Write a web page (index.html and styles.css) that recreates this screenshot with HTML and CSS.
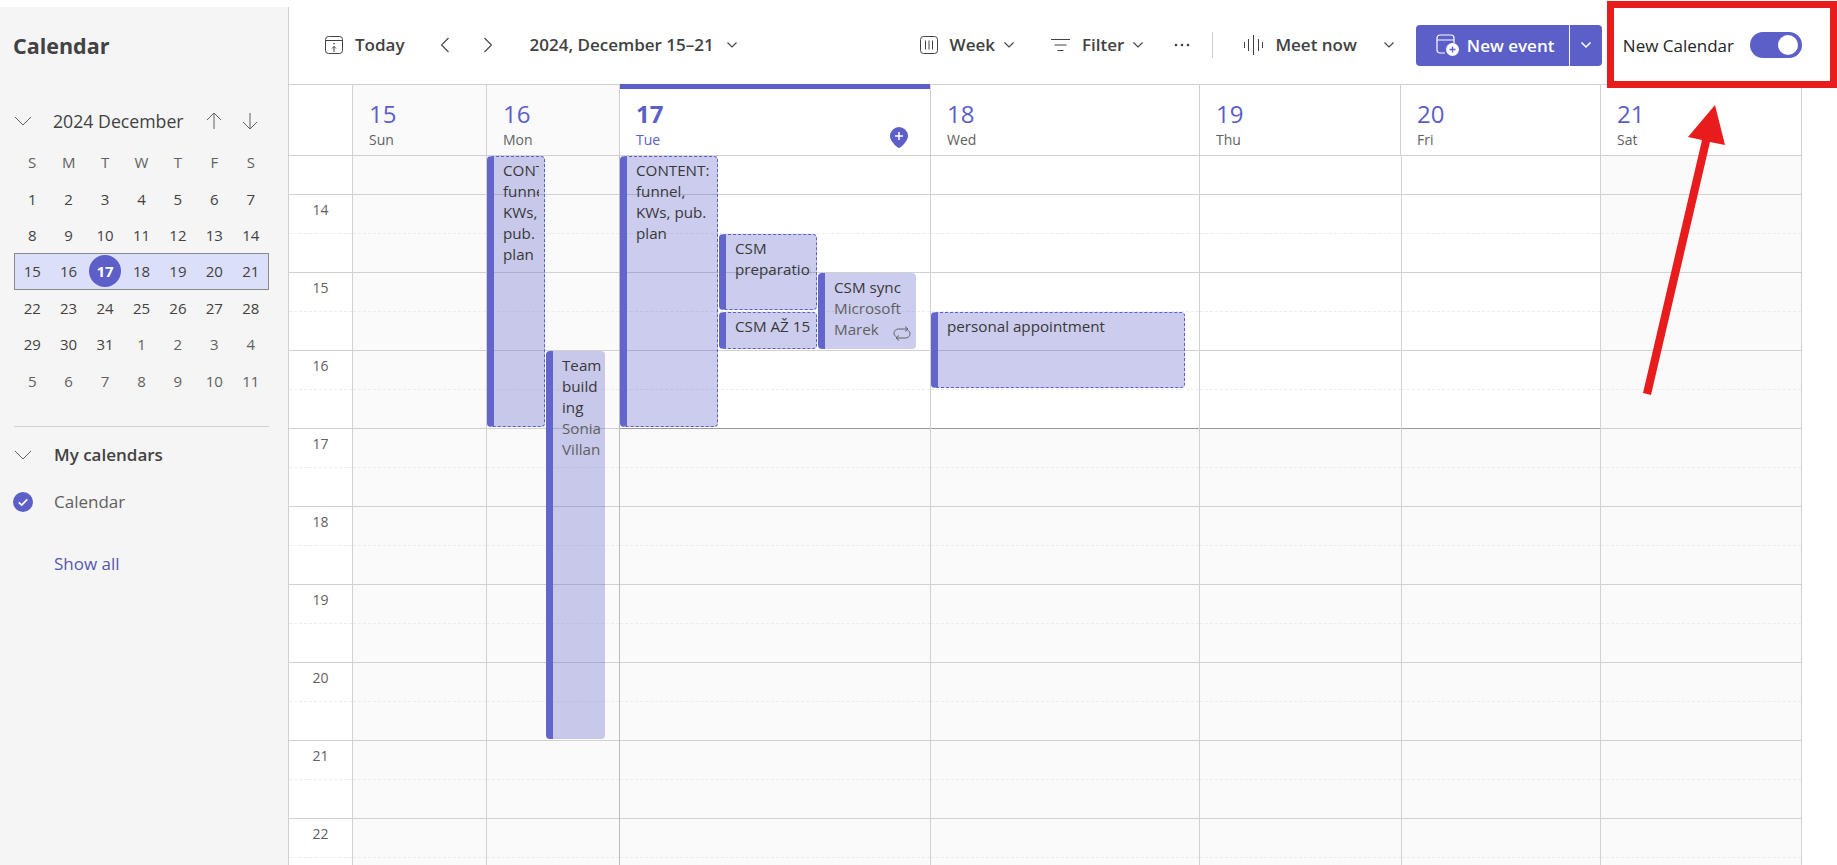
FILE: index.html
```html
<!DOCTYPE html>
<html lang="en">
<head>
<meta charset="utf-8">
<title>Calendar</title>
<link rel="stylesheet" href="styles.css">
</head>
<body>
<div class="app">
  <aside class="sidebar">
    <h1 class="side-title">Calendar</h1>
    <div class="month-head">
      <svg class="side-chev" width="18" height="10" viewBox="0 0 18 10"><path d="M1 1l8 8 8-8" fill="none" stroke="#616161"/></svg>
      <span class="month-name">2024 December</span>
      <svg class="arrow-up" width="16" height="18" viewBox="0 0 16 18"><path d="M8 17V1M1 8l7-7 7 7" fill="none" stroke="#616161"/></svg>
      <svg class="arrow-down" width="16" height="18" viewBox="0 0 16 18"><path d="M8 1v16M1 10l7 7 7-7" fill="none" stroke="#616161"/></svg>
    </div>
    <div class="month">
      <div class="row dow"><span>S</span><span>M</span><span>T</span><span>W</span><span>T</span><span>F</span><span>S</span></div>
      <div class="row"><span>1</span><span>2</span><span>3</span><span>4</span><span>5</span><span>6</span><span>7</span></div>
      <div class="row"><span>8</span><span>9</span><span>10</span><span>11</span><span>12</span><span>13</span><span>14</span></div>
      <div class="row sel"><span>15</span><span>16</span><span><b class="today-dot">17</b></span><span>18</span><span>19</span><span>20</span><span>21</span></div>
      <div class="row"><span>22</span><span>23</span><span>24</span><span>25</span><span>26</span><span>27</span><span>28</span></div>
      <div class="row"><span>29</span><span>30</span><span>31</span><span class="out">1</span><span class="out">2</span><span class="out">3</span><span class="out">4</span></div>
      <div class="row"><span class="out">5</span><span class="out">6</span><span class="out">7</span><span class="out">8</span><span class="out">9</span><span class="out">10</span><span class="out">11</span></div>
    </div>
    <div class="side-rule"></div>
    <div class="cal-head">
      <svg class="side-chev" width="18" height="10" viewBox="0 0 18 10"><path d="M1 1l8 8 8-8" fill="none" stroke="#616161"/></svg>
      <span class="cal-head-text">My calendars</span>
    </div>
    <div class="cal-item">
      <svg width="20" height="20" viewBox="0 0 20 20"><circle cx="10" cy="10" r="10" fill="#5b5fc7"/><path d="M5.800 10.400l2.900 2.700 5.600-5.800" fill="none" stroke="#fff" stroke-width="1.800"/></svg>
      <span class="cal-item-text">Calendar</span>
    </div>
    <a class="show-all">Show all</a>
  </aside>

  <main class="main">
    <header class="toolbar">
      <svg class="ic-today" width="18" height="18" viewBox="0 0 18 18"><rect x=".5" y=".5" width="17" height="17" rx="3" fill="none" stroke="#424242"/><path d="M1 4.500h16" stroke="#424242"/><path d="M9 16v-5.500M7 12.500l2-2 2 2" fill="none" stroke="#424242"/><circle cx="9" cy="7.500" r=".8" fill="#424242"/></svg>
      <span class="tb-text today-text">Today</span>
      <svg class="prev" width="10" height="16" viewBox="0 0 10 16"><path d="M8.500 1L1.500 8l7 7" fill="none" stroke="#424242" stroke-width="1.100"/></svg>
      <svg class="next" width="10" height="16" viewBox="0 0 10 16"><path d="M1.500 1l7 7-7 7" fill="none" stroke="#424242" stroke-width="1.100"/></svg>
      <span class="tb-text range">2024, December 15–21</span>
      <svg class="chev range-chev" width="12" height="8" viewBox="0 0 12 8"><path d="M1.500 1.500L6 6l4.500-4.500" fill="none" stroke="#424242" stroke-width="1.100"/></svg>

      <div class="tb-right">
        <svg width="18" height="18" viewBox="0 0 18 18"><rect x=".5" y=".5" width="17" height="17" rx="3" fill="none" stroke="#424242"/><path d="M5.500 4.500v9M9 4.500v9M12.500 4.500v9" stroke="#424242"/></svg>
        <span class="tb-text gap-icon">Week</span>
        <svg class="chev gap-chev" width="12" height="8" viewBox="0 0 12 8"><path d="M1.500 1.500L6 6l4.500-4.500" fill="none" stroke="#424242" stroke-width="1.100"/></svg>
        <svg class="ic-filter" width="19" height="14" viewBox="0 0 19 14"><path d="M0 1.500h19M3.500 7h12M6.500 12.500h6" stroke="#424242" stroke-width="1.100"/></svg>
        <span class="tb-text gap-icon">Filter</span>
        <svg class="chev gap-chev" width="12" height="8" viewBox="0 0 12 8"><path d="M1.500 1.500L6 6l4.500-4.500" fill="none" stroke="#424242" stroke-width="1.100"/></svg>
        <svg class="ic-more" width="16" height="4" viewBox="0 0 16 4"><circle cx="2" cy="2" r="1.300" fill="#424242"/><circle cx="8" cy="2" r="1.300" fill="#424242"/><circle cx="14" cy="2" r="1.300" fill="#424242"/></svg>
        <span class="tb-sep"></span>
        <svg class="ic-meet" width="19" height="20" viewBox="0 0 19 20"><path d="M.5 7v6M4.500 4v12M9.500 0v20M14.500 4v12M18.500 7v6" stroke="#424242"/></svg>
        <span class="tb-text gap-icon">Meet now</span>
        <svg class="chev meet-chev" width="12" height="8" viewBox="0 0 12 8"><path d="M1.500 1.500L6 6l4.500-4.500" fill="none" stroke="#424242" stroke-width="1.100"/></svg>
        <div class="new-event">
          <span class="ne-main">
            <svg width="23" height="22" viewBox="0 0 23 22"><path d="M9 19H4a3 3 0 0 1-3-3V4a3 3 0 0 1 3-3h11a3 3 0 0 1 3 3v5M1 6h17" fill="none" stroke="#fff" stroke-width="1.200"/><circle cx="16.500" cy="15.500" r="6.500" fill="#fff"/><path d="M16.500 12.500v6M13.500 15.500h6" stroke="#5b5fc7" stroke-width="1.300"/></svg>
            <span class="ne-text">New event</span>
          </span>
          <span class="ne-drop"><svg width="12" height="8" viewBox="0 0 12 8"><path d="M1.500 1.500L6 6l4.500-4.500" fill="none" stroke="#fff" stroke-width="1.500"/></svg></span>
        </div>
        <span class="nc-label">New Calendar</span>
        <span class="toggle"><span class="knob"></span></span>
      </div>
    </header>

    <div class="head-row">
      <div class="hd hd-gutter"></div>
      <div class="hd off"><div class="num">15</div><div class="dname">Sun</div></div>
      <div class="hd off"><div class="num">16</div><div class="dname">Mon</div></div>
      <div class="hd cur"><div class="num">17</div><div class="dname">Tue</div>
        <svg class="pin" width="18" height="21" viewBox="0 0 18 21"><path d="M9 0a9 9 0 0 1 9 9c0 4-4 8.500-7.500 11.300a2.400 2.400 0 0 1-3 0C4 17.500 0 13 0 9a9 9 0 0 1 9-9z" fill="#5b5fc7"/><path d="M9 5v8M5 9h8" stroke="#fff" stroke-width="1.500"/></svg>
      </div>
      <div class="hd"><div class="num">18</div><div class="dname">Wed</div></div>
      <div class="hd"><div class="num">19</div><div class="dname">Thu</div></div>
      <div class="hd"><div class="num">20</div><div class="dname">Fri</div></div>
      <div class="hd last"><div class="num">21</div><div class="dname">Sat</div></div>
    </div>

    <div class="body-row">
      <div class="col gutter">
        <div class="half"></div>
        <div class="hour"><span class="hlabel">14</span></div>
        <div class="hour"><span class="hlabel">15</span></div>
        <div class="hour"><span class="hlabel">16</span></div>
        <div class="hour"><span class="hlabel">17</span></div>
        <div class="hour"><span class="hlabel">18</span></div>
        <div class="hour"><span class="hlabel">19</span></div>
        <div class="hour"><span class="hlabel">20</span></div>
        <div class="hour"><span class="hlabel">21</span></div>
        <div class="hour"><span class="hlabel">22</span></div>
      </div>

      <div class="col off">
        <div class="half"></div><div class="hour"></div><div class="hour"></div><div class="hour"></div><div class="hour"></div><div class="hour"></div><div class="hour"></div><div class="hour"></div><div class="hour"></div><div class="hour"></div>
      </div>

      <div class="col off">
        <div class="half"></div><div class="hour"></div><div class="hour"></div><div class="hour"></div><div class="hour"></div><div class="hour"></div><div class="hour"></div><div class="hour"></div><div class="hour"></div><div class="hour"></div>
        <div class="ev dashed ev-mon1"><div class="ev-t">CONTENT: funnel, KWs, pub. plan</div></div>
        <div class="ev ev-team"><div class="ev-t">Team build<br>ing</div><div class="ev-s">Sonia Villan</div></div>
      </div>

      <div class="col work tue">
        <div class="half"></div><div class="hour"></div><div class="hour"></div><div class="hour endwork"></div><div class="hour"></div><div class="hour"></div><div class="hour"></div><div class="hour"></div><div class="hour"></div><div class="hour"></div>
        <div class="ev dashed ev-tue1"><div class="ev-t">CONTENT: funnel, KWs, pub. plan</div></div>
        <div class="ev dashed ev-prep"><div class="ev-t">CSM preparation</div></div>
        <div class="ev dashed ev-az"><div class="ev-t nowrap">CSM AŽ 15</div></div>
        <div class="ev ev-sync"><div class="ev-t nowrap">CSM sync</div><div class="ev-s nowrap">Microsoft</div><div class="ev-s nowrap">Marek</div>
          <svg class="repeat" width="18" height="15" viewBox="0 0 18 15"><path d="M3.500 11C1.800 10 1 8.800 1 7.200 1 4.800 3 3 5.500 3H15M12 .5L15 3l-3 2.500M14.500 4c1.700 1 2.500 2.200 2.500 3.800 0 2.400-2 4.200-4.500 4.200H3M6 9.500L3 12l3 2.500" fill="none" stroke="#616161"/></svg>
        </div>
      </div>

      <div class="col work">
        <div class="half"></div><div class="hour"></div><div class="hour"></div><div class="hour endwork"></div><div class="hour"></div><div class="hour"></div><div class="hour"></div><div class="hour"></div><div class="hour"></div><div class="hour"></div>
        <div class="ev dashed ev-pers"><div class="ev-t">personal appointment</div></div>
      </div>

      <div class="col work">
        <div class="half"></div><div class="hour"></div><div class="hour"></div><div class="hour endwork"></div><div class="hour"></div><div class="hour"></div><div class="hour"></div><div class="hour"></div><div class="hour"></div><div class="hour"></div>
      </div>

      <div class="col work">
        <div class="half"></div><div class="hour"></div><div class="hour"></div><div class="hour endwork"></div><div class="hour"></div><div class="hour"></div><div class="hour"></div><div class="hour"></div><div class="hour"></div><div class="hour"></div>
      </div>

      <div class="col off last">
        <div class="half"></div><div class="hour"></div><div class="hour"></div><div class="hour"></div><div class="hour"></div><div class="hour"></div><div class="hour"></div><div class="hour"></div><div class="hour"></div><div class="hour"></div>
      </div>
    </div>
  </main>
</div>

<div class="red-box"></div>
<svg class="red-arrow" width="90" height="300" viewBox="0 0 90 300"><polygon points="75,0 48,32 62,35 3,288 11,290 70,37 85,40" fill="#e81c1c"/></svg>
</body>
</html>
```

FILE: styles.css
```css
* { box-sizing: border-box; }
html, body { margin: 0; height: 100%; overflow: hidden; background: #fff; }
body { font-family: "Open Sans", "Noto Sans", sans-serif; color: #424242; position: relative; }
svg { display: block; flex: none; }

.app { display: flex; height: 865px; }

/* Sidebar */
.sidebar { width: 289px; flex: none; margin-top: 7px; padding: 0 0 0 14px; background: #f5f5f5; border-right: 1px solid #d1d1d1; }
.side-title { margin: 0 0 0 -1px; padding-top: 25px; height: 58px; font-size: 21.500px; line-height: 28px; font-weight: 700; color: #424242; }
.month-head { display: flex; align-items: center; height: 24px; margin-top: 44px; }
.month-name { margin-left: 21px; width: 145px; font-size: 17.700px; font-weight: 500; white-space: nowrap; }
.arrow-up { margin-left: 8px; }
.arrow-down { margin-left: 20px; }
.month { margin-top: 11px; width: 255px; font-size: 15px; }
.row { display: flex; height: 36.400px; align-items: center; }
.row span { flex: 1; text-align: center; }
.dow { color: #616161; }
.out { color: #616161; }
.sel { background: #dcdff9; outline: 1px solid #8a8a8a; outline-offset: -1px; }
.today-dot { display: block; width: 32px; height: 32px; margin: 0 auto; border-radius: 50%; background: #5b5fc7; color: #fff; line-height: 32px; font-weight: 700; }
.side-rule { width: 255px; height: 1px; margin-top: 27px; background: #d1d1d1; }
.cal-head { display: flex; align-items: center; height: 24px; margin-top: 16px; }
.cal-head-text { margin-left: 22px; font-size: 17px; font-weight: 600; }
.cal-item { display: flex; align-items: center; height: 24px; margin: 23px 0 0 -1px; }
.cal-item-text { margin-left: 21px; font-size: 17px; color: #616161; }
.show-all { display: block; margin: 38px 0 0 40px; font-size: 17px; line-height: 24px; color: #5558af; }

/* Toolbar */
.main { flex: 1; min-width: 0; display: flex; flex-direction: column; }
.toolbar { display: flex; align-items: center; height: 85px; flex: none; padding: 6px 35px 0 36px; border-bottom: 1px solid #d1d1d1; }
.tb-text { font-size: 17px; font-weight: 600; color: #424242; white-space: nowrap; line-height: 24px; }
.today-text { margin-left: 12px; }
.prev { margin-left: 35px; }
.next { margin-left: 33px; }
.range { margin-left: 37px; }
.range-chev { margin-left: 12px; }
.tb-right { margin-left: auto; display: flex; align-items: center; }
.gap-icon { margin-left: 12px; }
.gap-chev { margin-left: 8px; }
.ic-filter { margin-left: 36px; }
.ic-more { margin-left: 30px; }
.tb-sep { width: 1px; height: 26px; margin-left: 22px; background: #d1d1d1; }
.ic-meet { margin-left: 31px; }
.meet-chev { margin-left: 26px; }
.new-event { display: flex; height: 41px; margin-left: 21px; background: #5b5fc7; border-radius: 4px; color: #fff; }
.ne-main { display: flex; align-items: center; width: 154px; padding-left: 20px; border-right: 1px solid #fff; }
.ne-text { margin-left: 8px; font-size: 17px; font-weight: 600; white-space: nowrap; }
.ne-drop { display: flex; align-items: center; justify-content: center; width: 32px; }
.nc-label { margin-left: 21px; font-size: 17px; color: #242424; white-space: nowrap; }
.toggle { display: flex; align-items: center; justify-content: flex-end; width: 52px; height: 26px; margin-left: 16px; padding-right: 4px; border-radius: 13px; background: #5b5fc7; }
.knob { width: 20px; height: 20px; border-radius: 50%; background: #fff; }

/* Grid */
.head-row { display: grid; grid-template-columns: 63px 134px 133px 311px 269px 201px 200px 202px; flex: none; height: 71px; }
.hd { position: relative; padding: 13px 0 0 16px; border-left: 1px solid #d1d1d1; border-bottom: 1px solid #d1d1d1; }
.hd-gutter { border-left: 0; }
.hd.off { background: #fafafa; }
.hd.cur { margin-top: -1px; padding: 14px 0 0 16px; }
.hd.cur::before { content: ""; position: absolute; left: 0; right: 0; top: 0; height: 5px; background: #5b5fc7; }
.hd.last { border-right: 1px solid #d1d1d1; }
.num { font-size: 24px; line-height: 32px; color: #5b5fc7; }
.cur .num { font-weight: 700; }
.dname { font-size: 14px; line-height: 20px; color: #616161; }
.cur .dname { color: #5b5fc7; }
.pin { position: absolute; right: 22px; bottom: 7px; }

.body-row { display: grid; grid-template-columns: 63px 134px 133px 311px 269px 202px 199px 202px; flex: 1; min-height: 0; overflow: hidden; }
.col { position: relative; border-left: 1px solid #d1d1d1; }
.gutter { border-left: 0; }
.col.off { background: #fafafa; }
.col.last { border-right: 1px solid #d1d1d1; }
.col.tue { border-left-color: #bdbdbd; }
.half { height: 39px; border-bottom: 1px solid #d1d1d1; }
.hour { position: relative; height: 78px; border-bottom: 1px solid #d1d1d1; }
.hour::after { content: ""; position: absolute; left: 0; right: 0; top: 38px; border-top: 1px dashed #ececec; }
.work .hour { background: #fafafa; }
.work .half, .work .half + .hour, .work .half + .hour + .hour, .work .endwork { background: #fff; }
.work .endwork { border-bottom-color: #999; }
.hlabel { display: block; padding-top: 5px; font-size: 14px; line-height: 20px; text-align: center; color: #616161; }

/* Events */
.ev { position: absolute; overflow: hidden; padding: 4px 5px 0 9px; background: rgba(91, 95, 199, .31); border-left: 7px solid #6266cb; border-radius: 4px; font-size: 15.200px; line-height: 21px; }
.dashed { border: 1px dashed #5b5fc7; border-left: 7px solid #6266cb; padding-top: 3px; }
.ev-t { color: #383838; font-weight: 500; overflow: hidden; }
.ev-s { color: #616161; overflow: hidden; }
.nowrap { white-space: nowrap; }
.ev-mon1 { top: 0; left: 0; width: 58px; height: 271px; }
.ev-team { top: 195px; left: 59px; width: 59px; height: 388px; padding-right: 0; }
.ev-tue1 { top: 0; left: 0; width: 98px; height: 271px; }
.ev-prep { top: 78px; left: 99px; width: 98px; height: 76px; }
.ev-az { top: 156px; left: 99px; width: 98px; height: 37px; }
.ev-sync { top: 117px; left: 198px; width: 98px; height: 76px; }
.ev-pers { top: 156px; left: 0; width: 254px; height: 76px; }
.repeat { position: absolute; right: 5px; bottom: 8px; }

/* Annotation overlay */
.red-box { position: absolute; left: 1607px; top: 1px; width: 230px; height: 87px; border: 7.500px solid #e81c1c; }
.red-arrow { position: absolute; left: 1640px; top: 105px; }
```
